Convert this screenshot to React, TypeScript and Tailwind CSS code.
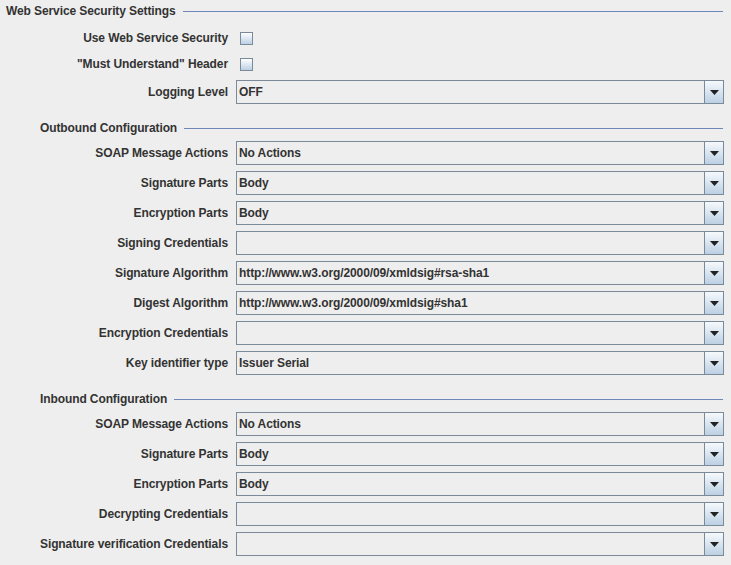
const font = { fontFamily: '"Liberation Sans", Arial, sans-serif' };

function SectionTitle({ title, indent }: { title: string; indent: string }) {
  return (
    <div className={`flex h-[22px] items-center pr-[8px] ${indent}`}>
      <span className="text-[12px] font-bold tracking-[-0.1px] text-[#333333]">{title}</span>
      <div className="ml-[7px] h-px flex-1 bg-[#6f86b8]" />
    </div>
  );
}

function Combo({ value }: { value: string }) {
  return (
    <div className="flex h-[24px] flex-1 border border-[#7a8a99] bg-[#eeeeee]">
      <div className="flex flex-1 items-center pl-[2px] text-[12px] font-bold tracking-[-0.1px] text-[#333333]">
        {value}
      </div>
      <div className="flex w-[19px] items-center justify-center border-l border-[#7a8a99] bg-gradient-to-b from-[#f6f9fc] to-[#bcd0e4]">
        <svg width="9" height="5" viewBox="0 0 9 5">
          <path d="M0 0h9L4.5 5z" fill="#222" />
        </svg>
      </div>
    </div>
  );
}

function Row({ label, value, className = "" }: { label: string; value: string; className?: string }) {
  return (
    <div className={`flex items-center pr-[7px] ${className}`}>
      <div className="w-[236px] shrink-0 pr-[8px] text-right text-[12px] font-bold tracking-[-0.1px] text-[#333333]">
        {label}
      </div>
      <Combo value={value} />
    </div>
  );
}

function CheckRow({ label }: { label: string }) {
  return (
    <div className="flex h-[26px] items-center">
      <div className="w-[228px] shrink-0 text-right text-[12px] font-bold tracking-[-0.1px] text-[#333333]">
        {label}
      </div>
      <div className="ml-[12px] h-[13px] w-[13px] border border-[#7a8a99] bg-gradient-to-b from-[#ffffff] to-[#bcd0e4]" />
    </div>
  );
}

export default function App() {
  return (
    <div className="h-[565px] w-[731px] overflow-hidden bg-[#eeeeee]" style={font}>
      <SectionTitle title="Web Service Security Settings" indent="pl-[6px]" />
      <div className="mt-[3px]">
        <CheckRow label="Use Web Service Security" />
        <CheckRow label={'"Must Understand" Header'} />
      </div>
      <Row label="Logging Level" value="OFF" className="mt-[3px]" />

      <div className="mt-[13px]">
        <SectionTitle title="Outbound Configuration" indent="pl-[40px]" />
      </div>
      <div className="mt-[2px] flex flex-col gap-[6px]">
        <Row label="SOAP Message Actions" value="No Actions" />
        <Row label="Signature Parts" value="Body" />
        <Row label="Encryption Parts" value="Body" />
        <Row label="Signing Credentials" value="" />
        <Row label="Signature Algorithm" value="http://www.w3.org/2000/09/xmldsig#rsa-sha1" />
        <Row label="Digest Algorithm" value="http://www.w3.org/2000/09/xmldsig#sha1" />
        <Row label="Encryption Credentials" value="" />
        <Row label="Key identifier type" value="Issuer Serial" />
      </div>

      <div className="mt-[13px]">
        <SectionTitle title="Inbound Configuration" indent="pl-[40px]" />
      </div>
      <div className="mt-[2px] flex flex-col gap-[6px]">
        <Row label="SOAP Message Actions" value="No Actions" />
        <Row label="Signature Parts" value="Body" />
        <Row label="Encryption Parts" value="Body" />
        <Row label="Decrypting Credentials" value="" />
        <Row label="Signature verification Credentials" value="" />
      </div>
    </div>
  );
}
